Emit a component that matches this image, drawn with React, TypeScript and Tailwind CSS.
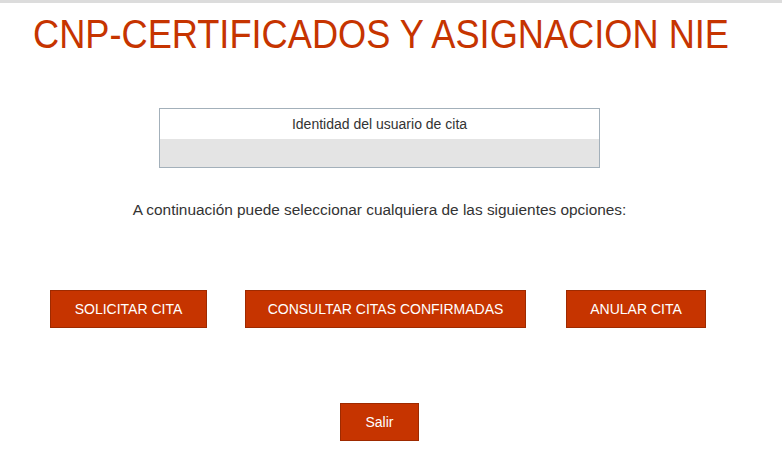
export default function App() {
  const buttons = [
    { label: "SOLICITAR CITA", w: "w-[157px]" },
    { label: "CONSULTAR CITAS CONFIRMADAS", w: "w-[281px]" },
    { label: "ANULAR CITA", w: "w-[140px]" },
  ];

  return (
    <div className="w-[782px] h-[457px] bg-white font-['Liberation_Sans',Arial,sans-serif] overflow-hidden">
      <div className="h-[3px] bg-[#dcdcdc]" />
      <div className="w-[759px]">
        <h1 className="pl-[33px] pt-[8px] text-[40px] leading-[46px] text-[#c63400] whitespace-nowrap">
          <span className="inline-block origin-left scale-x-[0.905]">CNP-CERTIFICADOS Y ASIGNACION NIE</span>
        </h1>

        <div className="mx-auto mt-[51px] w-[441px] border border-[#a3b0ba]">
          <div className="h-[30px] flex items-center justify-center text-[14px] text-[#333]">
            Identidad del usuario de cita
          </div>
          <div className="h-[28px] bg-[#e4e4e4]" />
        </div>

        <p className="mt-[32px] text-center text-[15.4px] leading-[20px] text-[#333]">
          A continuación puede seleccionar cualquiera de las siguientes opciones:
        </p>

        <div className="mt-[70px] flex pl-[50px]">
          {buttons.map((b, i) => (
            <button
              key={b.label}
              className={`${b.w} ${i === 1 ? "ml-[38px]" : i === 2 ? "ml-[40px]" : ""} h-[38px] bg-[#c63400] border border-[#9e2a00] text-white text-[14px]`}
            >
              {b.label}
            </button>
          ))}
        </div>

        <div className="mt-[75px] flex justify-center">
          <button className="w-[79px] h-[38px] bg-[#c63400] border border-[#9e2a00] text-white text-[14px]">
            Salir
          </button>
        </div>
      </div>
    </div>
  );
}
